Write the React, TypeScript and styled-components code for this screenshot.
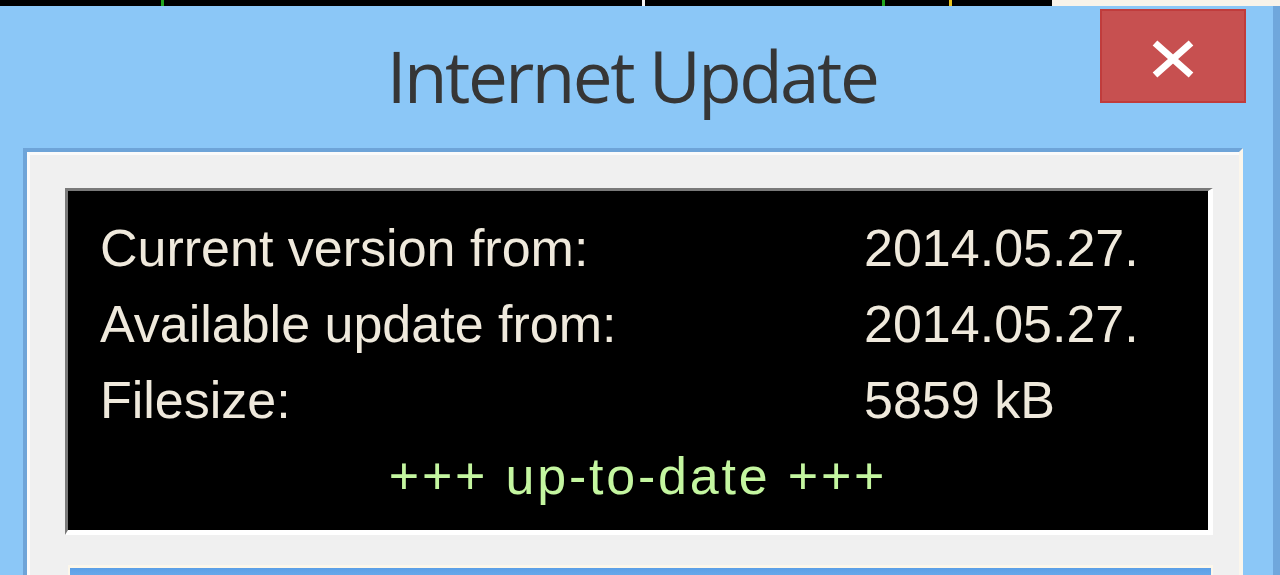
import { Fragment } from "react";
import styled, { createGlobalStyle } from "styled-components";

const Global = createGlobalStyle`
  html, body {
    margin: 0;
    padding: 0;
    background: #8bc7f7;
  }
  #root {
    width: 1280px;
    height: 575px;
    overflow: hidden;
  }
`;

const Screen = styled.div`
  width: 1280px;
  height: 575px;
  display: flex;
  flex-direction: column;
  overflow: hidden;
`;

const Strip = styled.div`
  height: 6px;
  display: flex;
  flex-shrink: 0;
`;

const Segment = styled.div<{ $w?: number; $c: string }>`
  width: ${(p) => (p.$w ? `${p.$w}px` : "auto")};
  flex: ${(p) => (p.$w ? "0 0 auto" : "1")};
  background: ${(p) => p.$c};
`;

const Window = styled.div`
  flex: 1;
  display: flex;
  flex-direction: column;
  position: relative;
  background: #8bc7f7;
  padding: 0 30px 0 23px;
  border-right: 7px solid #6fa7dc;
`;

const TitleBar = styled.div`
  height: 142px;
  box-sizing: border-box;
  padding: 34px 2px 0 0;
  display: flex;
  justify-content: center;
  align-items: flex-start;
`;

const Title = styled.h1`
  margin: 0;
  font-family: "Open Sans", "Noto Sans", sans-serif;
  font-weight: 400;
  font-size: 71px;
  line-height: 72px;
  letter-spacing: -2.5px;
  color: #363636;
`;

const CloseButton = styled.button`
  position: absolute;
  top: 3px;
  right: 27px;
  width: 146px;
  height: 94px;
  box-sizing: border-box;
  border: 2px solid #c03c3c;
  background: #c75050;
  padding: 6px 0 0;
  display: flex;
  align-items: center;
  justify-content: center;
`;

const Client = styled.div`
  flex: 1;
  border-top: 4px solid #6ea4d8;
  border-left: 4px solid #6ea4d8;
  border-right: 4px solid #fbf6ec;
  display: flex;
`;

const ClientInner = styled.div`
  flex: 1;
  background: #f0f0f0;
  border-top: 3px solid #fbfbfb;
  border-left: 3px solid #fbfbfb;
  padding: 33px 26px 0 35px;
  display: flex;
  flex-direction: column;
`;

const InfoPanel = styled.div`
  background: #000;
  border-top: 3px solid #7a7a7a;
  border-left: 3px solid #7a7a7a;
  border-bottom: 5px solid #ffffff;
  border-right: 5px solid #ffffff;
  padding: 19px 32px 16px 32px;
  display: grid;
  grid-template-columns: 764px 1fr;
  font-family: "Liberation Sans", Arial, sans-serif;
  font-size: 52px;
  line-height: 76px;
  color: #efe9dc;
`;

const Cell = styled.div`
  white-space: nowrap;
`;

const Status = styled.div`
  grid-column: 1 / -1;
  text-align: center;
  color: #c4f6a0;
  letter-spacing: 2.8px;
`;

const ProgressBar = styled.div`
  margin: 30px 0 0 3px;
  height: 40px;
  border-top: 3px solid #fdf7ea;
  border-left: 2px solid #fdf7ea;
  border-right: 2px solid #fdf7ea;
  background: linear-gradient(#5c9fe6, #74b2ef 40%);
`;

const rows = [
  ["Current version from:", "2014.05.27."],
  ["Available update from:", "2014.05.27."],
  ["Filesize:", "5859 kB"],
];

export default function App() {
  return (
    <Screen>
      <Global />
      <Strip>
        <Segment $w={161} $c="#000" />
        <Segment $w={3} $c="#1fa51f" />
        <Segment $w={478} $c="#000" />
        <Segment $w={3} $c="#f4f4f4" />
        <Segment $w={237} $c="#000" />
        <Segment $w={3} $c="#1fa51f" />
        <Segment $w={64} $c="#000" />
        <Segment $w={3} $c="#e8c21a" />
        <Segment $w={100} $c="#000" />
        <Segment $c="#f8f3ea" />
      </Strip>
      <Window>
        <TitleBar>
          <Title>Internet Update</Title>
        </TitleBar>
        <CloseButton aria-label="Close">
          <svg width="44" height="38" viewBox="0 0 44 38">
            <path d="M4 3 L40 35 M40 3 L4 35" stroke="#fff" strokeWidth="7" fill="none" />
          </svg>
        </CloseButton>
        <Client>
          <ClientInner>
            <InfoPanel>
              {rows.map(([label, value]) => (
                <Fragment key={label}>
                  <Cell>{label}</Cell>
                  <Cell>{value}</Cell>
                </Fragment>
              ))}
              <Status>+++ up-to-date +++</Status>
            </InfoPanel>
            <ProgressBar />
          </ClientInner>
        </Client>
      </Window>
    </Screen>
  );
}
